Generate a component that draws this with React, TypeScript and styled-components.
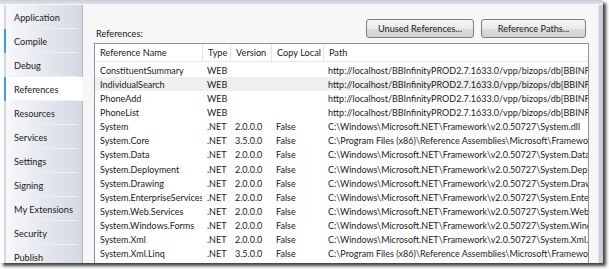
import React from "react";
import styled, { createGlobalStyle } from "styled-components";

const Global = createGlobalStyle`
  html, body { margin: 0; padding: 0; background: #ffffff; }
  body { width: 609px; height: 269px; overflow: hidden; font-family: Lato, "Noto Sans", sans-serif; }
`;

const Shadow = styled.div`
  width: 609px;
  height: 269px;
  position: relative;
  background: #fff;
`;

const Window = styled.div`
  width: 603px;
  height: 263px;
  display: flex;
  flex-direction: column;
  background: #f5f5f5;
  box-shadow: 3px 3px 3px rgba(0, 0, 0, 0.75);
  overflow: hidden;
`;

const TopStrip = styled.div`
  height: 4px;
  flex: none;
  background: linear-gradient(#c9ced8, #dfe3ea);
  border-bottom: 1px solid #f4f6f9;
`;

const Body = styled.div`
  flex: 1;
  display: flex;
  min-height: 0;
`;

const Sidebar = styled.div`
  width: 83px;
  flex: none;
  display: flex;
  flex-direction: column;
  padding-left: 4px;
  box-sizing: border-box;
  background: #fdfdfe;
  border-right: 1px solid #aeb6c4;
`;

const Tab = styled.div<{ $selected?: boolean; $accent?: boolean }>`
  height: 24px;
  flex: none;
  display: flex;
  align-items: center;
  padding-left: 8px;
  box-sizing: border-box;
  font-size: 9.2px;
  color: #1a1a1a;
  position: relative;
  background: ${(p) =>
    p.$selected ? "#ffffff" : "linear-gradient(to right, #f7f8fa, #d3d8e3)"};
  margin-right: ${(p) => (p.$selected ? "-1px" : "0")};
  border-left: 2px solid ${(p) => (p.$accent ? "#3c9af0" : "transparent")};
  &::after {
    content: "";
    position: absolute;
    left: 4px;
    right: 4px;
    bottom: 0;
    height: 1px;
    background: #eef0f4;
  }
`;

const Content = styled.div`
  flex: 1;
  display: flex;
  flex-direction: column;
  padding: 14px 9px 0 11px;
  box-sizing: border-box;
  min-width: 0;
  background: #f7f7f7;
`;

const ButtonRow = styled.div`
  display: flex;
  justify-content: flex-end;
  gap: 7px;
  height: 19px;
  padding-right: 3px;
`;

const Button = styled.div<{ $w: number }>`
  width: ${(p) => p.$w}px;
  height: 19px;
  box-sizing: border-box;
  border: 1px solid #7d7d7d;
  border-radius: 3px;
  background: linear-gradient(#f6f6f6 0%, #eaeaea 50%, #dcdcdc 51%, #d2d2d2 100%);
  display: flex;
  align-items: center;
  justify-content: center;
  font-size: 9.2px;
  color: #1a1a1a;
`;

const Label = styled.div`
  font-size: 9.2px;
  color: #1a1a1a;
  height: 10px;
  line-height: 10px;
  margin-top: -9px;
  padding-left: 2px;
`;

const List = styled.div`
  margin-top: 4px;
  flex: 1;
  background: #ffffff;
  border: 1px solid #8c939d;
  border-bottom: none;
  overflow: hidden;
  font-size: 9px;
  color: #1a1a1a;
`;

const Grid = styled.div`
  display: grid;
  grid-template-columns: 107px 28px 41px 52px 1fr;
`;

const HeaderCell = styled.div`
  height: 18px;
  display: flex;
  align-items: center;
  padding-left: 5px;
  box-sizing: border-box;
  border-left: 1px solid #e5e5e5;
  border-bottom: 1px solid #e8e8e8;
  white-space: nowrap;
  overflow: hidden;
  font-size: 9.2px;
  &:first-child { border-left: none; }
`;

const Rows = styled.div`
  padding-top: 1px;
`;

const Row = styled.div<{ $hl?: boolean }>`
  display: grid;
  grid-template-columns: 107px 28px 41px 52px 1fr;
  height: 14.15px;
  align-items: center;
  background: ${(p) => (p.$hl ? "#efefef" : "transparent")};
`;

const Cell = styled.div`
  padding-left: 5px;
  white-space: nowrap;
  overflow: hidden;
`;

const RightBar = styled.div`
  width: 4px;
  flex: none;
  background: #c9ced8;
  border-left: 1px solid #e4e7ec;
`;

const tabs = [
  "Application",
  "Compile",
  "Debug",
  "References",
  "Resources",
  "Services",
  "Settings",
  "Signing",
  "My Extensions",
  "Security",
  "Publish",
];

const fw = "C:\\Windows\\Microsoft.NET\\Framework\\v2.0.50727\\";
const ra = "C:\\Program Files (x86)\\Reference Assemblies\\Microsoft\\Framework\\v3.5\\";
const web = "http://localhost/BBInfinityPROD2.7.1633.0/vpp/bizops/db[BBINFINITY]";

const rows: [string, string, string, string, string][] = [
  ["ConstituentSummary", "WEB", "", "", web],
  ["IndividualSearch", "WEB", "", "", web],
  ["PhoneAdd", "WEB", "", "", web],
  ["PhoneList", "WEB", "", "", web],
  ["System", ".NET", "2.0.0.0", "False", fw + "System.dll"],
  ["System.Core", ".NET", "3.5.0.0", "False", ra + "System.Core.dll"],
  ["System.Data", ".NET", "2.0.0.0", "False", fw + "System.Data.dll"],
  ["System.Deployment", ".NET", "2.0.0.0", "False", fw + "System.Deployment.dll"],
  ["System.Drawing", ".NET", "2.0.0.0", "False", fw + "System.Drawing.dll"],
  ["System.EnterpriseServices", ".NET", "2.0.0.0", "False", fw + "System.EnterpriseServices.dll"],
  ["System.Web.Services", ".NET", "2.0.0.0", "False", fw + "System.Web.Services.dll"],
  ["System.Windows.Forms", ".NET", "2.0.0.0", "False", fw + "System.Windows.Forms.dll"],
  ["System.Xml", ".NET", "2.0.0.0", "False", fw + "System.Xml.dll"],
  ["System.Xml.Linq", ".NET", "3.5.0.0", "False", ra + "System.Xml.Linq.dll"],
];

export default function App() {
  return (
    <>
      <Global />
      <Shadow>
        <Window>
          <TopStrip />
          <Body>
            <Sidebar>
              {tabs.map((t) => (
                <Tab key={t} $selected={t === "References"} $accent={t === "References" || t === "Compile"}>
                  {t}
                </Tab>
              ))}
            </Sidebar>
            <Content>
              <ButtonRow>
                <Button $w={108}>Unused References...</Button>
                <Button $w={105}>Reference Paths...</Button>
              </ButtonRow>
              <Label>References:</Label>
              <List>
                <Grid>
                  <HeaderCell>Reference Name</HeaderCell>
                  <HeaderCell>Type</HeaderCell>
                  <HeaderCell>Version</HeaderCell>
                  <HeaderCell>Copy Local</HeaderCell>
                  <HeaderCell>Path</HeaderCell>
                </Grid>
                <Rows>
                  {rows.map((r, i) => (
                    <Row key={r[0]} $hl={i === 1}>
                      {r.map((c, j) => (
                        <Cell key={j}>{c}</Cell>
                      ))}
                    </Row>
                  ))}
                </Rows>
              </List>
            </Content>
            <RightBar />
          </Body>
        </Window>
      </Shadow>
    </>
  );
}
